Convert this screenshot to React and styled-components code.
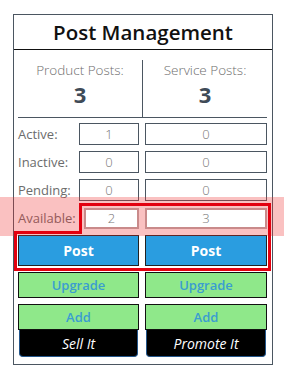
import React from 'react'
import styled, { createGlobalStyle } from 'styled-components'

const GlobalStyle = createGlobalStyle`
  html, body {
    margin: 0;
    padding: 0;
    background: #fff;
  }
  * { box-sizing: border-box; }
`

const counts = [
  { label: 'Active:', product: 1, service: 0 },
  { label: 'Inactive:', product: 0, service: 0 },
  { label: 'Pending:', product: 0, service: 0 },
  { label: 'Available:', product: 2, service: 3, highlight: true },
]

function App() {
  return (
    <Page>
      <GlobalStyle />
      <Card>
        <Header>Post Management</Header>
        <Body>
          <Stats>
            <StatCol>
              <StatLabel>Product Posts:</StatLabel>
              <StatValue>3</StatValue>
            </StatCol>
            <StatCol divider>
              <StatLabel>Service Posts:</StatLabel>
              <StatValue>3</StatValue>
            </StatCol>
          </Stats>
          <Rows>
            {counts.map((c) => (
              <Row key={c.label}>
                <RowLabel>{c.label}</RowLabel>
                <CountBox highlight={c.highlight}>{c.product}</CountBox>
                <CountBox wide highlight={c.highlight}>{c.service}</CountBox>
              </Row>
            ))}
          </Rows>
          <Buttons>
            <PostButton>Post</PostButton>
            <PostButton>Post</PostButton>
            <GreenButton>Upgrade</GreenButton>
            <GreenButton>Upgrade</GreenButton>
            <Stack>
              <GreenButton>Add</GreenButton>
              <TabButton>Sell It</TabButton>
            </Stack>
            <Stack>
              <GreenButton>Add</GreenButton>
              <TabButton>Promote It</TabButton>
            </Stack>
          </Buttons>
        </Body>
      </Card>
      <Band />
      <Outline width="284" height="376" viewBox="0 0 284 376">
        <polygon
          points="80.5,204.5 269.5,204.5 269.5,269.5 15.5,269.5 15.5,232.5 80.5,232.5"
          fill="none"
          stroke="#e3000f"
          strokeWidth="3"
        />
      </Outline>
    </Page>
  )
}

export default App

const Page = styled.div`
  position: relative;
  width: 284px;
  height: 376px;
  padding: 14px 0 0 13px;
  font-family: "Open Sans", "Liberation Sans", sans-serif;
`

const Card = styled.div`
  width: 260px;
  border: 1px solid #4b5661;
  display: flex;
  flex-direction: column;
`

const Header = styled.div`
  height: 35px;
  border-bottom: 1px solid #111;
  display: flex;
  align-items: center;
  justify-content: center;
  font-size: 20.5px;
  font-weight: 600;
  color: #111;
`

const Body = styled.div`
  padding: 10px 5px 7px 4px;
  display: flex;
  flex-direction: column;
`

const Stats = styled.div`
  display: grid;
  grid-template-columns: 124px 1fr;
  height: 58px;
  border-bottom: 1px solid #4b5661;
`

const StatCol = styled.div`
  display: flex;
  flex-direction: column;
  align-items: center;
  padding-top: 1px;
  border-left: ${(p) => (p.divider ? '1px solid #4b5661' : 'none')};
`

const StatLabel = styled.div`
  font-size: 13.5px;
  font-weight: 300;
  color: #6e6e6e;
  line-height: 18px;
`

const StatValue = styled.div`
  font-size: 22px;
  font-weight: 700;
  color: #3f4b57;
  line-height: 30px;
`

const Rows = styled.div`
  margin-top: 5px;
  display: flex;
  flex-direction: column;
  gap: 6px;
`

const Row = styled.div`
  display: flex;
  align-items: center;
  height: 22px;
`

const RowLabel = styled.div`
  width: 61px;
  font-size: 13px;
  color: #6c6c6c;
  font-weight: 400;
  white-space: nowrap;
`

const CountBox = styled.div`
  position: relative;
  z-index: ${(p) => (p.highlight ? 2 : 'auto')};
  width: ${(p) => (p.wide ? '122px' : p.highlight ? '55px' : '60px')};
  margin-left: ${(p) => (p.wide ? '6px' : p.highlight ? '5px' : '0')};
  height: ${(p) => (p.highlight ? '21px' : '22px')};
  background: #fff;
  border: ${(p) => (p.highlight ? '2px solid #c98a8a' : '1px solid #4b5661')};
  display: flex;
  align-items: center;
  justify-content: center;
  font-size: 13px;
  font-weight: 300;
  color: #777;
`

const Buttons = styled.div`
  margin-top: 6px;
  display: grid;
  grid-template-columns: 121px 122px;
  column-gap: 6px;
  row-gap: 6px;
`

const PostButton = styled.div`
  height: 31px;
  background: #2a9de0;
  border: 1px solid #222;
  color: #fff;
  font-size: 14px;
  font-weight: 700;
  display: flex;
  align-items: center;
  justify-content: center;
`

const GreenButton = styled.div`
  height: 26px;
  background: #8fe88a;
  border: 1px solid #111;
  color: #3a9dd0;
  font-size: 13px;
  font-weight: 600;
  display: flex;
  align-items: center;
  justify-content: center;
`

const Stack = styled.div`
  display: flex;
  flex-direction: column;
`

const TabButton = styled.div`
  height: 27px;
  margin: 0 1px;
  background: #000;
  border: 1px solid #24568a;
  border-top: none;
  border-radius: 0 0 4px 4px;
  color: #fff;
  font-size: 14px;
  font-style: italic;
  font-weight: 500;
  display: flex;
  align-items: center;
  justify-content: center;
`

const Band = styled.div`
  position: absolute;
  z-index: 1;
  left: 0;
  right: 0;
  top: 197px;
  height: 39px;
  background: rgba(240, 50, 50, 0.3);
  pointer-events: none;
`

const Outline = styled.svg`
  position: absolute;
  z-index: 3;
  top: 0;
  left: 0;
  pointer-events: none;
`
